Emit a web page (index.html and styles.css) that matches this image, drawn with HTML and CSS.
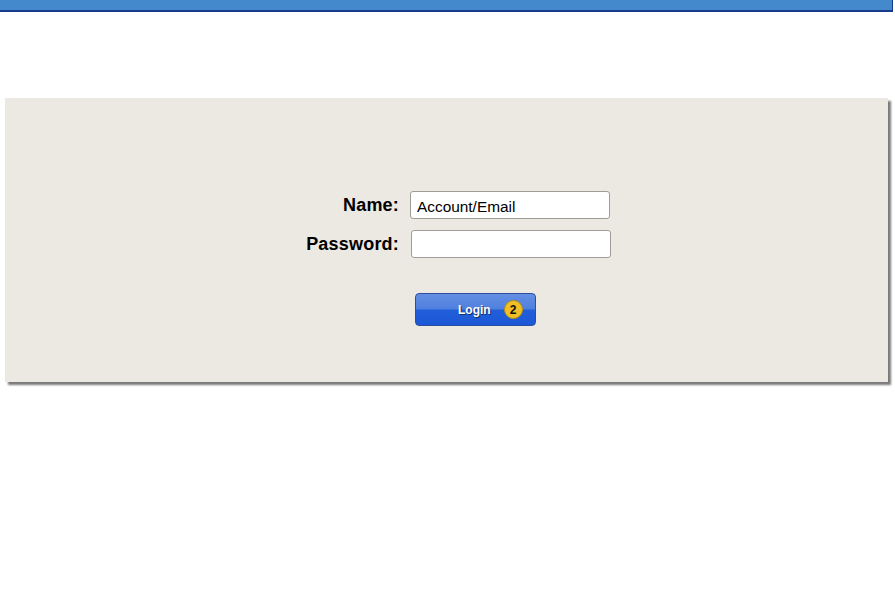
FILE: index.html
```html
<!DOCTYPE html>
<html>
<head>
<meta charset="utf-8">
<link rel="stylesheet" href="styles.css">
</head>
<body>
<div class="topbar"></div>
<div class="panel">
  <form class="login-form">
    <label class="lbl" for="name">Name:</label>
    <input class="field" id="name" type="text" value="Account/Email">
    <label class="lbl" for="pw">Password:</label>
    <input class="field field-pw" id="pw" type="password">
    <div class="actions">
      <button type="button" class="btn">
        <span class="btn-text">Login</span>
        <span class="badge">2</span>
      </button>
    </div>
  </form>
</div>
</body>
</html>
```

FILE: styles.css
```css
html, body {
  margin: 0;
  padding: 0;
  background: #ffffff;
  font-family: "Liberation Sans", Arial, sans-serif;
}

body {
  min-height: 610px;
}

.topbar {
  width: 892px;
  height: 10px;
  background: #4589cd;
  border-bottom: 2px solid #16398c;
  border-right: 1px solid #16398c;
}

.panel {
  margin: 86px 0 20px 5px;
  width: 883px;
  height: 284px;
  background: #ece9e3;
  box-shadow: 3px 3px 2px #7a7a7a;
  box-sizing: border-box;
  padding-top: 93px;
}

.login-form {
  display: grid;
  grid-template-columns: 394px 200px;
  column-gap: 11px;
  row-gap: 11px;
  margin: 0;
}

.lbl {
  justify-self: end;
  align-self: center;
  font-weight: bold;
  font-size: 18px;
  letter-spacing: 0.2px;
  padding-top: 1px;
  color: #000;
}

.field {
  box-sizing: border-box;
  width: 200px;
  height: 28px;
  border: 1px solid #a09d96;
  border-radius: 3px;
  background: #fff;
  font-family: "Liberation Sans", Arial, sans-serif;
  font-size: 15.4px;
  color: #000;
  padding: 3px 5px 0 6px;
  margin: 0;
  outline: none;
}

.field-pw {
  margin-left: 1px;
}

.actions {
  grid-column: 2;
  padding-top: 24px;
  padding-left: 5px;
}

.btn {
  box-sizing: border-box;
  width: 121px;
  height: 33px;
  border: 1px solid #2b4f9e;
  border-radius: 4px;
  background: linear-gradient(to bottom, #648fe2 0%, #4f80df 48%, #215ed9 52%, #1c58d6 100%);
  display: flex;
  align-items: center;
  padding: 0 0 0 42px;
  margin: 0;
  cursor: pointer;
}

.btn-text {
  color: #fff;
  font-family: "Liberation Sans", Arial, sans-serif;
  font-weight: bold;
  font-size: 12px;
  text-shadow: 1px 1px 0 #1a2f66;
}

.badge {
  margin-left: 13px;
  width: 19px;
  height: 19px;
  box-sizing: border-box;
  border-radius: 50%;
  background: #efbf24;
  border: 1px solid #b58e14;
  color: #111;
  font-family: "Liberation Sans", Arial, sans-serif;
  font-weight: bold;
  font-size: 12px;
  display: flex;
  align-items: center;
  justify-content: center;
}
```
